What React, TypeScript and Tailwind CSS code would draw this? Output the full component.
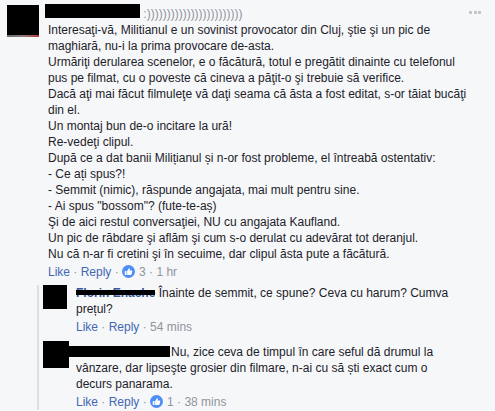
import React from 'react';

const body = [
  'Interesaţi-vă, Militianul e un sovinist provocator din Cluj, ştie şi un pic de maghiară, nu-i la prima provocare de-asta.',
  'Urmăriţi derularea scenelor, e o făcătură, totul e pregătit dinainte cu telefonul pus pe filmat, cu o poveste că cineva a păţit-o şi trebuie să verifice.',
  'Dacă aţi mai făcut filmuleţe vă daţi seama că ăsta a fost editat, s-or tăiat bucăţi din el.',
  'Un montaj bun de-o incitare la ură!',
  'Re-vedeţi clipul.',
  'După ce a dat banii Milițianul și n-or fost probleme, el întreabă ostentativ:',
  '- Ce ați spus?!',
  '- Semmit (nimic), răspunde angajata, mai mult pentru sine.',
  '- Ai spus "bossom"? (fute-te-aș)',
  'Şi de aici restul conversaţiei, NU cu angajata Kaufland.',
  'Un pic de răbdare şi aflăm şi cum s-o derulat cu adevărat tot deranjul.',
  'Nu că n-ar fi cretini şi în secuime, dar clipul ăsta pute a făcătură.',
];

function LikeIcon() {
  return (
    <svg width="13" height="13" viewBox="0 0 16 16" className="inline-block align-[-2px]">
      <circle cx="8" cy="8" r="8" fill="#4f8ef7" />
      <rect x="3.4" y="7.4" width="2.2" height="4.8" rx="0.4" fill="#fff" />
      <path
        d="M6.3 7.4 L8.4 4.3 C8.8 3.8 9.7 4 9.6 4.8 L9.3 6.7 H11.7 C12.4 6.7 12.8 7.3 12.6 7.9 L11.8 11.3 C11.6 11.9 11.2 12.2 10.6 12.2 H6.3 Z"
        fill="#fff"
      />
    </svg>
  );
}

function Actions({ likes, time }: { likes?: number; time: string }) {
  return (
    <div className="mt-[2px]">
      <span className="text-[#4267b2]">Like</span>
      <span className="text-[#90949c]"> · </span>
      <span className="text-[#4267b2]">Reply</span>
      <span className="text-[#90949c]"> · </span>
      {likes !== undefined && (
        <>
          <LikeIcon />
          <span className="ml-[4px] text-[#90949c]">{likes}</span>
          <span className="text-[#90949c]"> · </span>
        </>
      )}
      <span className="text-[#90949c]">{time}</span>
    </div>
  );
}

export default function App() {
  return (
    <div className="w-[495px] h-[411px] overflow-hidden bg-[#f6f7f9] font-['Liberation_Sans',Arial,sans-serif] text-[12px] leading-[16px] text-[#1d2129]">
      {/* main comment */}
      <div className="flex pt-[5px] pl-[7px]">
        <div className="w-[32px] h-[32px] shrink-0 flex flex-col bg-black">
          <div className="flex-1" />
          <div className="h-[2px] bg-gradient-to-r from-[#6b6b6b] via-[#8c7a7a] to-[#b3323c]" />
        </div>
        <div className="ml-[9px] flex-1 pt-px">
          <div>
            <span className="relative -top-[2px] inline-block align-top ml-[-3px] w-[95px] h-[14px] bg-black" />
            <span className="text-[#90949c]"> :))))))))))))))))))))))))</span>
          </div>
          {body.map((line, i) => (
            <div key={i}>{line}</div>
          ))}
          <Actions likes={3} time="1 hr" />
        </div>
        <div className="w-[26px] shrink-0 pt-[6px] flex gap-[1.5px]">
          <span className="w-[3px] h-[3px] rounded-[1px] bg-[#bec2c9]" />
          <span className="w-[3px] h-[3px] rounded-[1px] bg-[#bec2c9]" />
          <span className="w-[3px] h-[3px] rounded-[1px] bg-[#bec2c9]" />
        </div>
      </div>

      {/* replies */}
      <div className="ml-[37px] mr-[35px] mt-[5px] border-l-2 border-[#dddfe2] pl-[4px]">
        <div className="flex">
          <div className="w-[24px] h-[24px] shrink-0 bg-black" />
          <div className="ml-[9px] flex-1">
            <div>
              <span className="relative font-bold text-[#365899]">
                Florin Enache
                <span className="absolute left-0 right-0 top-[4px] h-[5px] bg-black" />
              </span>{' '}
              Înainte de semmit, ce spune? Ceva cu harum? Cumva prețul?
            </div>
            <Actions time="54 mins" />
          </div>
        </div>

        <div className="flex mt-[9px]">
          <div className="w-[26px] h-[27px] mt-[-3px] shrink-0 bg-black" />
          <div className="ml-[7px] flex-1">
            <div>
              <span className="relative top-[2px] inline-block align-top ml-[-10px] mr-[1px] w-[104px] h-[11px] bg-black" />
              Nu, zice ceva de timpul în care seful dă drumul la vânzare, dar lipseşte grosier din filmare, n-ai cu să ști exact cum o decurs panarama.
            </div>
            <Actions likes={1} time="38 mins" />
          </div>
        </div>
      </div>
    </div>
  );
}
